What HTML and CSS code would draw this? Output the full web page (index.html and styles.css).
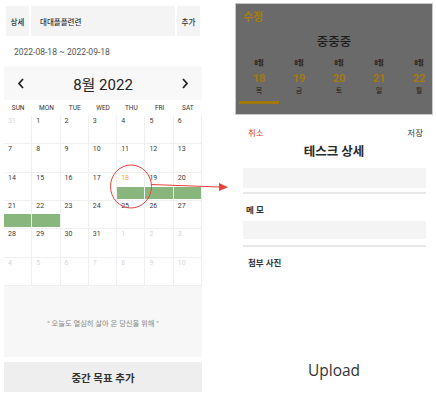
FILE: index.html
```html
<!DOCTYPE html>
<html lang="ko">
<head>
<meta charset="utf-8">
<link rel="stylesheet" href="styles.css">
</head>
<body>
<div class="page">
  <div class="left">
    <div class="topbar">
      <div class="chip">상세</div>
      <div class="field">대대플플련련</div>
      <div class="chip">추가</div>
    </div>
    <div class="range">2022-08-18 ~ 2022-09-18</div>
    <div class="cal-head">
      <svg class="nav" width="8" height="11" viewBox="0 0 8 11"><path d="M6 1 L2 5.5 L6 10" fill="none" stroke="#222" stroke-width="1.8"/></svg>
      <span class="month">8월 2022</span>
      <svg class="nav" width="8" height="11" viewBox="0 0 8 11"><path d="M2 1 L6 5.5 L2 10" fill="none" stroke="#222" stroke-width="1.8"/></svg>
    </div>
    <div class="weekdays">
      <span>SUN</span><span>MON</span><span>TUE</span><span>WED</span><span>THU</span><span>FRI</span><span>SAT</span>
    </div>
    <div class="grid">
      <div class="cell"><span class="num other">31</span></div>
      <div class="cell"><span class="num">1</span></div>
      <div class="cell"><span class="num">2</span></div>
      <div class="cell"><span class="num">3</span></div>
      <div class="cell"><span class="num">4</span></div>
      <div class="cell"><span class="num">5</span></div>
      <div class="cell"><span class="num">6</span></div>

      <div class="cell"><span class="num">7</span></div>
      <div class="cell"><span class="num">8</span></div>
      <div class="cell"><span class="num">9</span></div>
      <div class="cell"><span class="num">10</span></div>
      <div class="cell"><span class="num">11</span></div>
      <div class="cell"><span class="num">12</span></div>
      <div class="cell"><span class="num">13</span></div>

      <div class="cell"><span class="num">14</span></div>
      <div class="cell"><span class="num">15</span></div>
      <div class="cell"><span class="num">16</span></div>
      <div class="cell"><span class="num">17</span></div>
      <div class="cell"><span class="num today">18</span><div class="bar"></div></div>
      <div class="cell"><span class="num">19</span><div class="bar"></div></div>
      <div class="cell"><span class="num">20</span><div class="bar"></div></div>

      <div class="cell"><span class="num">21</span><div class="bar bar-b"></div></div>
      <div class="cell"><span class="num">22</span><div class="bar bar-b"></div></div>
      <div class="cell"><span class="num">23</span></div>
      <div class="cell"><span class="num">24</span></div>
      <div class="cell"><span class="num">25</span></div>
      <div class="cell"><span class="num">26</span></div>
      <div class="cell"><span class="num">27</span></div>

      <div class="cell"><span class="num">28</span></div>
      <div class="cell"><span class="num">29</span></div>
      <div class="cell"><span class="num">30</span></div>
      <div class="cell"><span class="num">31</span></div>
      <div class="cell"><span class="num other">1</span></div>
      <div class="cell"><span class="num other">2</span></div>
      <div class="cell"><span class="num other">3</span></div>

      <div class="cell"><span class="num other">4</span></div>
      <div class="cell"><span class="num other">5</span></div>
      <div class="cell"><span class="num other">6</span></div>
      <div class="cell"><span class="num other">7</span></div>
      <div class="cell"><span class="num other">8</span></div>
      <div class="cell"><span class="num other">9</span></div>
      <div class="cell"><span class="num other">10</span></div>
    </div>
    <div class="quote">" 오늘도 열심히 살아 온 당신을 위해 "</div>
    <div class="add">중간 목표 추가</div>
  </div>

  <div class="right">
    <div class="sheet">
      <div class="edit">수정</div>
      <div class="sheet-title">중중중</div>
      <div class="days">
        <div class="day active"><span class="m">8월</span><span class="d">18</span><span class="w">목</span><span class="line"></span></div>
        <div class="day"><span class="m">8월</span><span class="d">19</span><span class="w">금</span></div>
        <div class="day"><span class="m">8월</span><span class="d">20</span><span class="w">토</span></div>
        <div class="day"><span class="m">8월</span><span class="d">21</span><span class="w">일</span></div>
        <div class="day"><span class="m">8월</span><span class="d">22</span><span class="w">월</span></div>
      </div>
    </div>
    <div class="actions"><span class="cancel">취소</span><span class="save">저장</span></div>
    <div class="detail-title">테스크 상세</div>
    <div class="input input-a"></div>
    <div class="divider"></div>
    <div class="label">메 모</div>
    <div class="input input-b"></div>
    <div class="divider divider-b"></div>
    <div class="label label-photo">첨부 사진</div>
    <div class="upload">Upload</div>
  </div>

  <svg class="annot" width="436" height="404" viewBox="0 0 436 404">
    <ellipse cx="131" cy="186.5" rx="20.5" ry="21.5" fill="none" stroke="#e8403a" stroke-width="1"/>
    <line x1="151" y1="184.5" x2="220" y2="187" stroke="#e8403a" stroke-width="1.2"/>
    <polygon points="219,183 228,187.2 219,191" fill="#e8403a"/>
  </svg>
</div>
</body>
</html>
```

FILE: styles.css
```css
html, body {
  margin: 0;
  padding: 0;
  background: #ffffff;
}

body {
  font-family: "Roboto", "Noto Sans CJK KR", sans-serif;
  color: #333;
}

.page {
  position: relative;
  width: 436px;
  height: 404px;
  display: flex;
  overflow: hidden;
}

/* ---------- left ---------- */
.left {
  width: 198px;
  margin-left: 4px;
  display: flex;
  flex-direction: column;
}

.topbar {
  margin-top: 6px;
  padding: 0 2px;
  height: 30px;
  display: flex;
  gap: 2px;
}

.chip {
  width: 23px;
  background: #f4f4f4;
  font-size: 7.5px;
  font-weight: 500;
  color: #333;
  display: flex;
  align-items: center;
  justify-content: center;
}

.field {
  flex: 1;
  background: #f4f4f4;
  font-size: 7.5px;
  font-weight: 500;
  color: #333;
  padding-left: 9px;
  display: flex;
  align-items: center;
}

.range {
  margin-top: 10px;
  margin-left: 10px;
  height: 12px;
  line-height: 12px;
  font-size: 8.5px;
  color: #555;
}

.cal-head {
  margin-top: 8px;
  height: 34px;
  background: #f8f8f8;
  display: flex;
  align-items: center;
  justify-content: space-between;
  padding: 0 13px 0 13px;
}

.month {
  font-size: 15px;
  color: #222;
  padding-top: 1px;
}

.weekdays {
  height: 16px;
  display: grid;
  grid-template-columns: repeat(7, 1fr);
  align-items: center;
  font-size: 6.5px;
  color: #333;
  text-align: center;
}

.grid {
  height: 170px;
  display: grid;
  grid-template-columns: repeat(7, 1fr);
  grid-template-rows: repeat(6, 1fr);
}

.cell {
  border-right: 1px solid #efefef;
  border-bottom: 1px solid #efefef;
  display: flex;
  flex-direction: column;
  min-width: 0;
}

.num {
  display: block;
  padding: 1px 0 0 4px;
  height: 8px;
  line-height: 8px;
  font-size: 7px;
  color: #3a3a3a;
}

.num.other {
  color: #d6d6d6;
}

.num.today {
  color: #f0aa14;
}

.bar {
  margin-top: 5px;
  height: 12px;
  background: #88b67c;
}

.bar.bar-b {
  margin-top: 4px;
  height: 13px;
}

.quote {
  height: 71px;
  background: #f7f7f7;
  display: flex;
  align-items: center;
  justify-content: center;
  font-size: 7.3px;
  color: #858585;
  padding-top: 2px;
  box-sizing: border-box;
}

.add {
  margin-top: 5px;
  height: 30px;
  background: #eeeeee;
  display: flex;
  align-items: center;
  justify-content: center;
  font-size: 10.5px;
  font-weight: 700;
  color: #333;
}

/* ---------- right ---------- */
.right {
  margin-left: 33px;
  width: 198px;
  display: flex;
  flex-direction: column;
}

.sheet {
  margin-top: 3px;
  height: 112px;
  box-sizing: border-box;
  background: #6a6a6a;
  border: 1px solid #c9c9c9;
  overflow: hidden;
  display: flex;
  flex-direction: column;
}

.edit {
  margin: 7px 0 0 7px;
  height: 14px;
  line-height: 14px;
  font-size: 11px;
  font-weight: 700;
  color: #a87d0a;
}

.sheet-title {
  margin-top: 9px;
  height: 16px;
  line-height: 16px;
  text-align: center;
  font-size: 12.5px;
  font-weight: 500;
  color: #1c1c1c;
}

.days {
  margin: 8px 0 0 3px;
  display: flex;
}

.day {
  flex: 0 0 40px;
  display: flex;
  flex-direction: column;
  align-items: center;
}

.day .m {
  height: 10px;
  line-height: 10px;
  font-size: 6.5px;
  font-weight: 700;
  color: #1c1c1c;
}

.day .d {
  margin-top: 4px;
  height: 14px;
  line-height: 14px;
  font-size: 11px;
  font-weight: 700;
  color: #a47a0c;
}

.day .w {
  height: 10px;
  line-height: 10px;
  font-size: 7px;
  color: #1c1c1c;
}

.day .line {
  margin-top: 5px;
  width: 40px;
  height: 2.5px;
  background: #a27808;
}

.actions {
  margin-top: 12px;
  height: 12px;
  line-height: 12px;
  padding: 0 10px 0 13px;
  display: flex;
  justify-content: space-between;
  font-size: 8.5px;
}

.cancel {
  color: #e0441c;
}

.save {
  color: #333;
}

.detail-title {
  margin-top: 5px;
  height: 16px;
  line-height: 16px;
  text-align: center;
  font-size: 12.5px;
  font-weight: 700;
  color: #2a2a2a;
}

.input {
  margin: 8px 7px 0 8px;
  height: 20px;
  background: #f4f4f4;
}

.input.input-b {
  margin-top: 5px;
  height: 18px;
}

.divider {
  margin: 4px 7px 0 8px;
  height: 2px;
  background: #e8e8e8;
}

.divider.divider-b {
  margin-top: 6px;
}

.label {
  margin: 10px 0 0 11px;
  height: 12px;
  line-height: 12px;
  font-size: 8.5px;
  font-weight: 700;
  color: #333;
}

.label.label-photo {
  margin-left: 13px;
}

.upload {
  margin-top: 91px;
  height: 20px;
  line-height: 20px;
  text-align: center;
  font-family: "Open Sans", "Noto Sans", sans-serif;
  font-size: 15.5px;
  color: #333;
}

/* annotation overlay */
.annot {
  position: absolute;
  left: 0;
  top: 0;
  pointer-events: none;
}
```
